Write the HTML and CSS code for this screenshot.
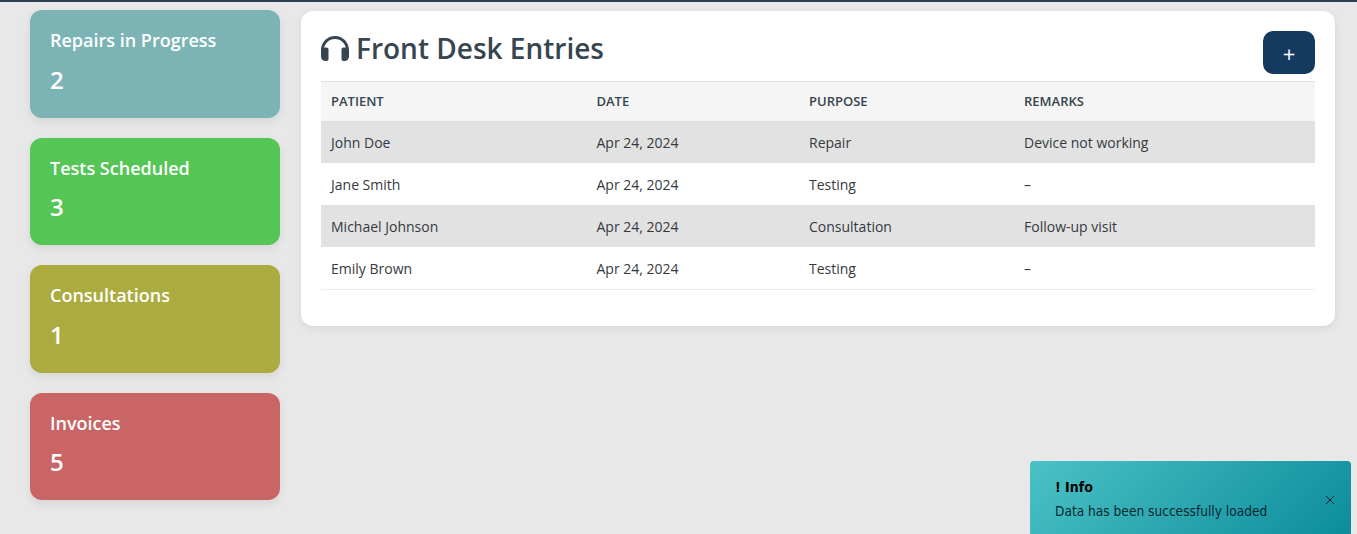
FILE: index.html
```html
<!DOCTYPE html>
<html lang="en">
<head>
<meta charset="utf-8">
<title>Front Desk Entries</title>
<link rel="stylesheet" href="styles.css">
</head>
<body>
<div class="topbar"></div>
<div class="layout">
  <aside class="sidebar">
    <div class="stat stat-teal"><div class="stat-label">Repairs in Progress</div><div class="stat-value">2</div></div>
    <div class="stat stat-green"><div class="stat-label">Tests Scheduled</div><div class="stat-value">3</div></div>
    <div class="stat stat-olive"><div class="stat-label">Consultations</div><div class="stat-value">1</div></div>
    <div class="stat stat-red"><div class="stat-label">Invoices</div><div class="stat-value">5</div></div>
  </aside>
  <main class="panel">
    <div class="panel-head">
      <h1 class="title">
        <svg class="title-icon" viewBox="0 0 28 25" aria-hidden="true"><path fill="currentColor" d="M14 0C6.3 0 0 6.3 0 14v7h3v-7C3 7.9 7.9 3 14 3s11 4.900 11 11v7h3v-7C28 6.300 21.700 0 14 0z"/><path fill="currentColor" d="M5.500 11.500C6.900 11.500 7.500 12.500 7.500 13.500v9.500c0 1.200-.8 2-2 2h-1C2 25 0 23 0 20.500v-4.500C0 13.500 2.500 11.500 5.500 11.500zM22.500 11.500c3 0 5.500 2 5.500 4.500v4.500c0 2.500-2 4.500-4.500 4.500h-1c-1.200 0-2-.8-2-2v-9.500c0-1 .6-2 2-2z"/></svg>
        Front Desk Entries
      </h1>
      <button class="add-btn" type="button">+</button>
    </div>
    <table class="entries">
      <thead>
        <tr><th class="col-patient">Patient</th><th class="col-date">Date</th><th class="col-purpose">Purpose</th><th>Remarks</th></tr>
      </thead>
      <tbody>
        <tr><td>John Doe</td><td>Apr 24, 2024</td><td>Repair</td><td>Device not working</td></tr>
        <tr><td>Jane Smith</td><td>Apr 24, 2024</td><td>Testing</td><td>–</td></tr>
        <tr><td>Michael Johnson</td><td>Apr 24, 2024</td><td>Consultation</td><td>Follow-up visit</td></tr>
        <tr><td>Emily Brown</td><td>Apr 24, 2024</td><td>Testing</td><td>–</td></tr>
      </tbody>
    </table>
  </main>
</div>
<div class="toast">
  <div class="toast-body">
    <div class="toast-title">! Info</div>
    <div class="toast-text">Data has been successfully loaded</div>
  </div>
  <svg class="toast-close" viewBox="0 0 10 10" aria-hidden="true"><path d="M1 1l8 8M9 1l-8 8" stroke="currentColor" stroke-width="1" fill="none"/></svg>
</div>
</body>
</html>
```
FILE: styles.css
```css
* { box-sizing: border-box; }
html, body { height: 100%; }
body {
  margin: 0;
  background: #e8e8e8;
  font-family: "Open Sans", sans-serif;
  color: #343a40;
  overflow: hidden;
}
.topbar { height: 2px; background: #2c3e50; }
.layout {
  display: flex;
  align-items: flex-start;
  gap: 21px;
  padding: 8px 22px 0 30px;
}
.sidebar {
  flex: 0 0 250px;
  display: flex;
  flex-direction: column;
  gap: 20px;
}
.stat {
  height: 107.6px;
  padding: 20px;
  border-radius: 12px;
  color: #fff;
  box-shadow: 0 4px 10px rgba(0, 0, 0, 0.08);
}
.stat-label { font-size: 18px; font-weight: 600; line-height: 21.6px; }
.stat-value { font-size: 24px; font-weight: 600; line-height: 29px; margin-top: 13px; }
.stat-teal { background: #7cb4b5; }
.stat-green { background: #55c555; }
.stat-olive { background: #abab3f; }
.stat-red { background: #c96565; }
.panel {
  flex: 1;
  margin-top: 1px;
  height: 315px;
  padding: 20px;
  background: #fff;
  border-radius: 12px;
  box-shadow: 0 2px 8px rgba(0, 0, 0, 0.08);
}
.panel-head {
  display: flex;
  justify-content: space-between;
  align-items: flex-start;
  height: 50px;
}
.title {
  display: flex;
  align-items: center;
  gap: 7px;
  margin: 0;
  font-size: 28px;
  font-weight: 600;
  line-height: 34px;
  color: #36454f;
}
.title-icon { width: 28px; height: 25px; margin-top: 1px; }
.add-btn {
  width: 52px;
  height: 43px;
  border: 0;
  border-radius: 10px;
  background: #153a60;
  color: #fff;
  font: 400 22px/1 "Open Sans", sans-serif;
}
.entries {
  width: 100%;
  border-collapse: separate;
  border-spacing: 0;
  table-layout: fixed;
  font-size: 14px;
}
.entries th, .entries td {
  height: 42px;
  padding: 1px 10px 0;
  text-align: left;
}
.entries th {
  height: 40px;
  padding: 0 10px 2px;
  background: #f5f5f5;
  border-top: 1px solid #e2e2e2;
  font-size: 13px;
  font-weight: 600;
  text-transform: uppercase;
  color: #36454f;
}
.col-patient { width: 265.5px; }
.col-date { width: 212.5px; }
.col-purpose { width: 215px; }
.entries td { border-bottom: 1px solid transparent; color: #343a40; }
.entries tbody tr:nth-child(odd) td { background: #e2e2e2; }
.entries tbody tr:last-child td {
  height: 43px;
  padding-bottom: 1px;
  border-bottom-color: #eee;
}
.toast {
  position: fixed;
  left: 1030px;
  top: 461px;
  width: 321px;
  height: 82px;
  display: flex;
  justify-content: space-between;
  padding: 16px 16px 0 25px;
  border-radius: 4px;
  background: linear-gradient(135deg, #4bc1c5, #0b8b9b);
  color: #06282e;
}
.toast-title { font: 700 14px/20px "DejaVu Sans", sans-serif; font-stretch: condensed; color: #000; }
.toast-text { font: 400 13.6px/20px "DejaVu Sans", sans-serif; font-stretch: condensed; margin-top: 4px; }
.toast-close { width: 10px; height: 10px; margin-top: 18px; }
```
